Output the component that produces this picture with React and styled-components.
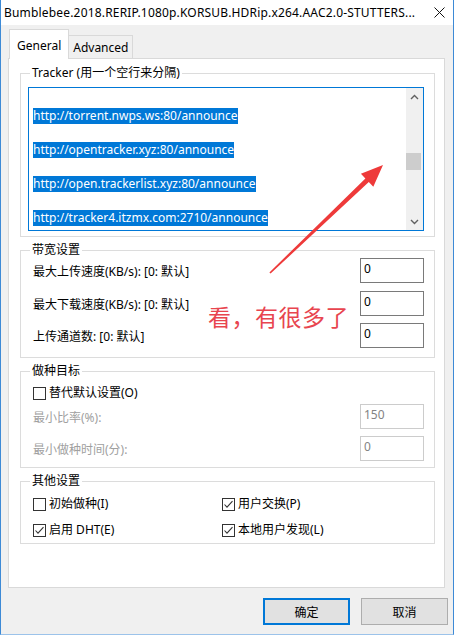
import styled, { createGlobalStyle } from "styled-components";

const GlobalStyle = createGlobalStyle`
  html, body {
    margin: 0;
    padding: 0;
    background: #fff;
  }
  body {
    font-family: "Noto Sans", "Noto Sans CJK SC", sans-serif;
    font-size: 12px;
    color: #000;
  }
  * {
    box-sizing: border-box;
  }
`;

const Window = styled.div`
  position: relative;
  width: 454px;
  height: 635px;
  background: #f0f0f0;
  border-left: 1px solid #3d8ad6;
  border-right: 1px solid #3d8ad6;
  border-bottom: 1px solid #9cc3ea;
  display: flex;
  flex-direction: column;
`;

const TitleBar = styled.div`
  height: 25px;
  background: #fff;
  display: flex;
  align-items: center;
  padding: 0 8px 0 3px;
  flex-shrink: 0;
`;

const Title = styled.div`
  flex: 1;
  white-space: nowrap;
  overflow: hidden;
  font-size: 12px;
  line-height: 16px;
  letter-spacing: 0.18px;
`;

const CloseButton = styled.div`
  width: 12px;
  height: 12px;
  display: flex;
  align-items: center;
  justify-content: center;
  margin-top: -1px;
`;

const Body = styled.div`
  flex: 1;
  display: flex;
  flex-direction: column;
  padding: 4px 8px 0 7px;
`;

const TabStrip = styled.div`
  display: flex;
  align-items: flex-end;
  height: 29px;
  padding-left: 1px;
`;

const Tab = styled.div`
  position: relative;
  display: flex;
  align-items: center;
  line-height: 16px;
  border: 1px solid #d9d9d9;
  ${(p) =>
    p.$active
      ? `
    height: 30px;
    margin-bottom: -1px;
    padding: 2px 7px 0;
    background: #fff;
    border-bottom: none;
    z-index: 1;
  `
      : `
    height: 23px;
    padding: 1px 4px 0;
    background: #f0f0f0;
    border-left: none;
    border-bottom: none;
  `}
`;

const Panel = styled.div`
  height: 530px;
  background: #fff;
  border: 1px solid #d9d9d9;
  padding: 0 9px 0 11px;
  display: flex;
  flex-direction: column;
`;

const Group = styled.fieldset`
  margin: ${(p) => (p.$first ? "6px" : "5px")} 0 0;
  min-width: 0;
  border: 1px solid #dcdcdc;
  padding: ${(p) => p.$pad || "0 10px 5px 7px"};
`;

const Legend = styled.legend`
  padding: 0 2px;
  margin-left: 2px;
  line-height: 16px;
  font-size: 12px;
  white-space: nowrap;
`;

const TrackerBox = styled.div`
  margin-top: 6px;
  height: 144px;
  border: 1px solid #0078d7;
  background: #fff;
  display: flex;
`;

const TrackerLines = styled.div`
  flex: 1;
  padding: 2px 0 0 4px;
  overflow: hidden;
`;

const TrackerLine = styled.div`
  height: 17px;
  white-space: nowrap;
`;

const Selected = styled.span`
  display: inline-block;
  line-height: 16px;
  background: #0078d7;
  color: #fff;
`;

const ScrollBar = styled.div`
  width: 17px;
  background: #f0f0f0;
  display: flex;
  flex-direction: column;
`;

const ScrollArrow = styled.div`
  height: 17px;
  display: flex;
  align-items: center;
  justify-content: center;
`;

const ScrollTrack = styled.div`
  flex: 1;
  padding-top: ${(p) => p.$offset}px;
`;

const ScrollThumb = styled.div`
  width: 15px;
  height: 17px;
  background: #cdcdcd;
`;

const FieldRow = styled.div`
  display: grid;
  grid-template-columns: 1fr 64px;
  align-items: center;
  height: 25px;
  padding-left: 5px;
  margin-top: ${(p) => p.$gap || 0}px;
  color: ${(p) => (p.$disabled ? "#a0a0a0" : "#000")};
`;

const FieldLabel = styled.span`
  padding-top: 3px;
  line-height: 16px;
  white-space: nowrap;
`;

const Field = styled.input`
  width: 64px;
  height: 25px;
  margin: 0;
  border: 1px solid ${(p) => (p.disabled ? "#cccccc" : "#7a7a7a")};
  background: #fff;
  padding: 0 3px 4px;
  font: inherit;
  font-size: 12px;
  color: ${(p) => (p.disabled ? "#838383" : "#000")};
  outline: none;
`;

const CheckLabel = styled.label`
  display: flex;
  align-items: center;
  height: 16px;
  line-height: 16px;
  padding-left: 5px;
  margin-top: ${(p) => p.$gap || 0}px;
  white-space: nowrap;
`;

const Box = styled.span`
  width: 13px;
  height: 13px;
  border: 1px solid #333;
  background: #fff;
  margin-right: 3px;
  display: flex;
  align-items: center;
  justify-content: center;
  flex-shrink: 0;
`;

const CheckGrid = styled.div`
  display: grid;
  grid-template-columns: 189px 1fr;
  row-gap: 10px;
  padding-top: 7px;
`;

const ButtonRow = styled.div`
  display: flex;
  justify-content: flex-end;
  gap: 11px;
  margin: 10px -3px 0 0;
`;

const DialogButton = styled.button`
  width: 87px;
  height: 27px;
  margin: 0;
  padding: 0;
  background: #e1e1e1;
  border: ${(p) => (p.$primary ? "2px solid #0078d7" : "1px solid #adadad")};
  font: inherit;
  font-size: 12px;
  color: #000;
`;

const Overlay = styled.svg`
  position: absolute;
  left: -1px;
  top: 0;
  pointer-events: none;
`;

const Note = styled.div`
  position: absolute;
  left: 207px;
  top: 305px;
  font-family: "Noto Sans CJK SC", sans-serif;
  font-size: 23px;
  line-height: 23px;
  letter-spacing: 0.5px;
  color: #e8454f;
  white-space: nowrap;
  pointer-events: none;
`;

// the list is scrolled part way, so only these entries are in view
const trackers = [
  "http://torrent.nwps.ws:80/announce",
  "http://opentracker.xyz:80/announce",
  "http://open.trackerlist.xyz:80/announce",
  "http://tracker4.itzmx.com:2710/announce",
];

const Check = ({ checked, children, gap }) => (
  <CheckLabel $gap={gap}>
    <Box>
      {checked && (
        <svg width="11" height="11" viewBox="0 0 11 11">
          <polyline
            points="1.5,5.5 4,8.2 9.5,2.2"
            fill="none"
            stroke="#333"
            strokeWidth="1.1"
          />
        </svg>
      )}
    </Box>
    {children}
  </CheckLabel>
);

const Chevron = ({ down }) => (
  <svg width="9" height="6" viewBox="0 0 9 6">
    <polyline
      points={down ? "1,1 4.5,4.5 8,1" : "1,5 4.5,1.5 8,5"}
      fill="none"
      stroke="#606060"
      strokeWidth="1.4"
    />
  </svg>
);

export default function App() {
  return (
    <>
      <GlobalStyle />
      <Window>
        <TitleBar>
          <Title>Bumblebee.2018.RERIP.1080p.KORSUB.HDRip.x264.AAC2.0-STUTTERS...</Title>
          <CloseButton>
            <svg width="11" height="11" viewBox="0 0 11 11">
              <path d="M0.5 0.5 L10.5 10.5 M10.5 0.5 L0.5 10.5" stroke="#111" strokeWidth="1" />
            </svg>
          </CloseButton>
        </TitleBar>

        <Body>
          <TabStrip>
            <Tab $active>General</Tab>
            <Tab>Advanced</Tab>
          </TabStrip>

          <Panel>
            <Group $first>
              <Legend>Tracker (用一个空行来分隔)</Legend>
              <TrackerBox>
                <TrackerLines>
                  {trackers.map((url) => (
                    <div key={url}>
                      <TrackerLine />
                      <TrackerLine>
                        <Selected>{url}</Selected>
                      </TrackerLine>
                    </div>
                  ))}
                  <TrackerLine />
                </TrackerLines>
                <ScrollBar>
                  <ScrollArrow>
                    <Chevron />
                  </ScrollArrow>
                  <ScrollTrack $offset={48}>
                    <ScrollThumb />
                  </ScrollTrack>
                  <ScrollArrow>
                    <Chevron down />
                  </ScrollArrow>
                </ScrollBar>
              </TrackerBox>
            </Group>

            <Group $pad="0 10px 9px 7px">
              <Legend>带宽设置</Legend>
              <FieldRow>
                <FieldLabel>最大上传速度(KB/s): [0: 默认]</FieldLabel>
                <Field readOnly value="0" />
              </FieldRow>
              <FieldRow $gap={7.5}>
                <FieldLabel>最大下载速度(KB/s): [0: 默认]</FieldLabel>
                <Field readOnly value="0" />
              </FieldRow>
              <FieldRow $gap={7.5}>
                <FieldLabel>上传通道数: [0: 默认]</FieldLabel>
                <Field readOnly value="0" />
              </FieldRow>
            </Group>

            <Group $pad="0 10px 6px 7px">
              <Legend>做种目标</Legend>
              <Check gap={6}>替代默认设置(O)</Check>
              <FieldRow $gap={3} $disabled>
                <FieldLabel>最小比率(%):</FieldLabel>
                <Field disabled value="150" />
              </FieldRow>
              <FieldRow $gap={7} $disabled>
                <FieldLabel>最小做种时间(分):</FieldLabel>
                <Field disabled value="0" />
              </FieldRow>
            </Group>

            <Group $pad="0 10px 5px 7px">
              <Legend>其他设置</Legend>
              <CheckGrid>
                <Check>初始做种(I)</Check>
                <Check checked>用户交换(P)</Check>
                <Check checked>启用 DHT(E)</Check>
                <Check checked>本地用户发现(L)</Check>
              </CheckGrid>
            </Group>
          </Panel>

          <ButtonRow>
            <DialogButton $primary>确定</DialogButton>
            <DialogButton>取消</DialogButton>
          </ButtonRow>
        </Body>

        <Overlay width="454" height="635" viewBox="0 0 454 635">
          <polygon
            points="269.4,272.4 365.4,178.4 360.9,173.7 383,165 373.3,186.7 368.8,182 270.6,273.6"
            fill="#ee3a3a"
          />
        </Overlay>
        <Note>看，有很多了</Note>
      </Window>
    </>
  );
}
